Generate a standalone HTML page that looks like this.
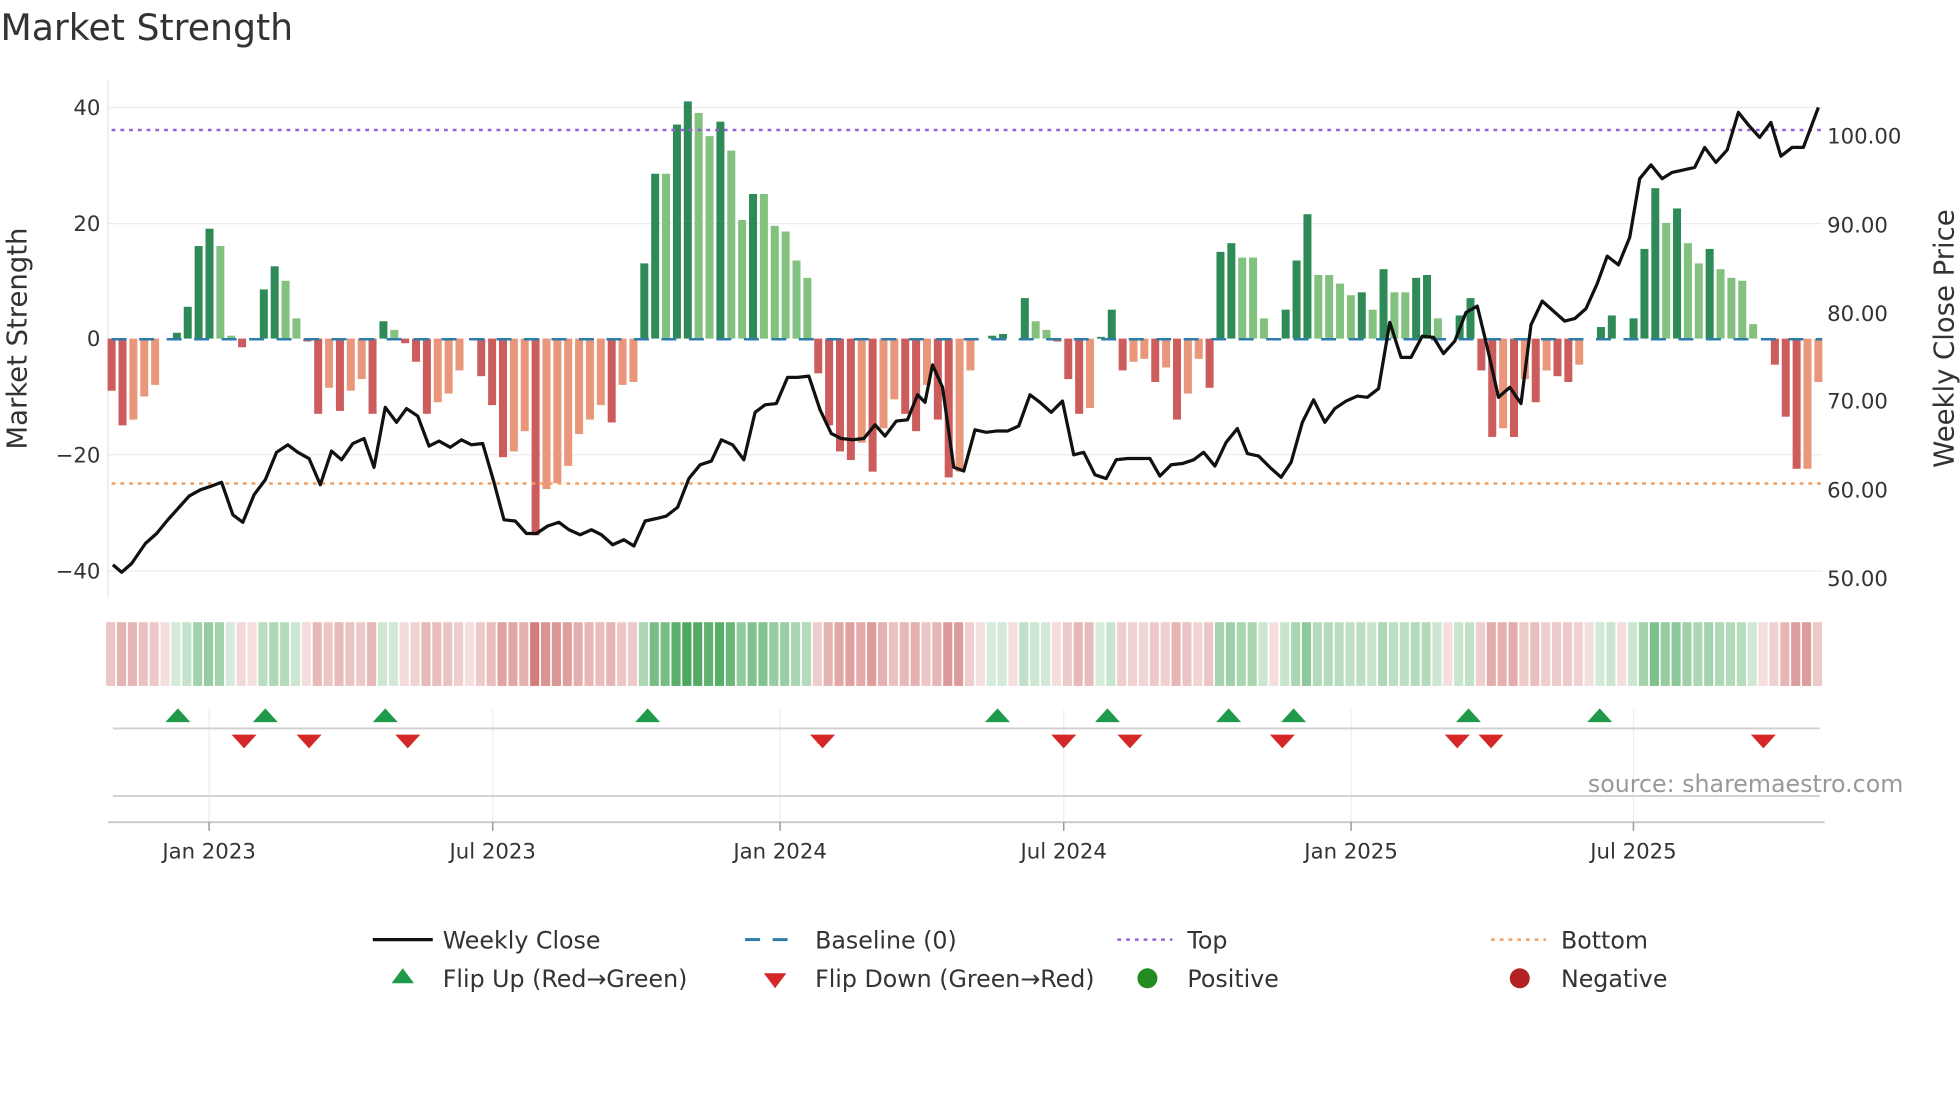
<!DOCTYPE html>
<html><head><meta charset="utf-8"><style>
html,body{margin:0;padding:0;background:#fff;width:1960px;height:1102px;overflow:hidden}
svg{display:block}
text{font-family:"DejaVu Sans","Liberation Sans",sans-serif;fill:#333}
</style></head><body>
<svg id="s" width="1960" height="1102" viewBox="0 0 1568 882" xmlns="http://www.w3.org/2000/svg">
<text x="0" y="32" font-size="29">Market Strength</text>
<g stroke="#ececec" stroke-width="1">
<line x1="86" y1="86" x2="1458" y2="86"/><line x1="86" y1="179" x2="1458" y2="179"/><line x1="86" y1="364" x2="1458" y2="364"/><line x1="86" y1="457" x2="1458" y2="457"/>
</g>
<line x1="86" y1="64" x2="86" y2="478" stroke="#e6e6e6"/>
<g id="bars"></g>
<line x1="89" y1="271.5" x2="1458" y2="271.5" stroke="#2f7cab" stroke-width="2" stroke-dasharray="12,10"/>
<line x1="89" y1="104" x2="1458" y2="104" stroke="#9a5fd8" stroke-width="2" stroke-dasharray="3,4"/>
<line x1="89" y1="387" x2="1458" y2="387" stroke="#f0a060" stroke-width="2" stroke-dasharray="3,4"/>
<polyline id="line" fill="none" stroke="#111" stroke-width="2.6" stroke-linejoin="round"/>
<g font-size="17" text-anchor="end">
<text x="80" y="92">40</text><text x="80" y="185">20</text><text x="80" y="277">0</text><text x="80" y="370">−20</text><text x="80" y="463">−40</text>
</g>
<g font-size="17">
<text x="1462" y="115">100.00</text><text x="1462" y="186">90.00</text><text x="1462" y="257">80.00</text><text x="1462" y="327">70.00</text><text x="1462" y="398">60.00</text><text x="1462" y="469">50.00</text>
</g>
<text font-size="22" transform="translate(21,271) rotate(-90)" text-anchor="middle">Market Strength</text>
<text font-size="22" transform="translate(1563,271) rotate(-90)" text-anchor="middle">Weekly Close Price</text>
<g id="strip"></g>
<g stroke="#eceef2" stroke-width="1">
<line x1="167" y1="568" x2="167" y2="658"/><line x1="394" y1="568" x2="394" y2="658"/><line x1="624" y1="568" x2="624" y2="658"/><line x1="851" y1="568" x2="851" y2="658"/><line x1="1081" y1="568" x2="1081" y2="658"/><line x1="1307" y1="568" x2="1307" y2="658"/>
</g>
<line x1="90" y1="583" x2="1456" y2="583" stroke="#d0d0d0" stroke-width="1.5"/>
<line x1="90" y1="637" x2="1456" y2="637" stroke="#d0d0d0" stroke-width="1.5"/>
<line x1="86" y1="658" x2="1460" y2="658" stroke="#c8c8c8" stroke-width="1.5"/>
<g stroke="#999" stroke-width="1.2">
<line x1="167" y1="658" x2="167" y2="665"/><line x1="394" y1="658" x2="394" y2="665"/><line x1="624" y1="658" x2="624" y2="665"/><line x1="851" y1="658" x2="851" y2="665"/><line x1="1081" y1="658" x2="1081" y2="665"/><line x1="1307" y1="658" x2="1307" y2="665"/>
</g>
<g id="flips"></g>
<text x="1523" y="634" font-size="19" text-anchor="end" style="fill:#999">source: sharemaestro.com</text>
<g font-size="17" text-anchor="middle">
<text x="167" y="687">Jan 2023</text><text x="394" y="687">Jul 2023</text><text x="624" y="687">Jan 2024</text><text x="851" y="687">Jul 2024</text><text x="1081" y="687">Jan 2025</text><text x="1307" y="687">Jul 2025</text>
</g>
<g font-size="19">
<line x1="298" y1="752" x2="346" y2="752" stroke="#111" stroke-width="2.6"/><text x="354" y="759">Weekly Close</text>
<line x1="596" y1="752" x2="640" y2="752" stroke="#2f7cab" stroke-width="2.4" stroke-dasharray="12,10"/><text x="652" y="759">Baseline (0)</text>
<line x1="894" y1="752" x2="938" y2="752" stroke="#9a5fd8" stroke-width="2" stroke-dasharray="3,4"/><text x="950" y="759">Top</text>
<line x1="1193" y1="752" x2="1237" y2="752" stroke="#f0a060" stroke-width="2" stroke-dasharray="3,4"/><text x="1249" y="759">Bottom</text>
<polygon points="322,775 331,787 313,787" fill="#1f9a4a"/><text x="354" y="790">Flip Up (Red→Green)</text>
<polygon points="611,779 629,779 620,791" fill="#d62728"/><text x="652" y="790">Flip Down (Green→Red)</text>
<circle cx="918" cy="783" r="8" fill="#228b22"/><text x="950" y="790">Positive</text>
<circle cx="1216" cy="783" r="8" fill="#b22222"/><text x="1249" y="790">Negative</text>
</g>
</svg>
<script>
var v=[-9,-15,-14,-10,-8,0,1,5.5,16,19,16,0.5,-1.5,0,8.5,12.5,10,3.5,-0.5,-13,-8.5,-12.5,-9,-7,-13,3,1.5,-0.8,-4,-13,-11,-9.5,-5.5,0,-6.5,-11.5,-20.5,-19.5,-16,-34,-26,-25,-22,-16.5,-14,-11.5,-14.5,-8,-7.5,13,28.5,28.5,37,41,39,35,37.5,32.5,20.5,25,25,19.5,18.5,13.5,10.5,-6,-15,-19.5,-21,-18,-23,-15.5,-10.5,-13,-16,-8,-14,-24,-23,-5.5,0,0.5,0.8,0,7,3,1.5,-0.5,-7,-13,-12,0.3,5,-5.5,-4,-3.5,-7.5,-5,-14,-9.5,-3.5,-8.5,15,16.5,14,14,3.5,0,5,13.5,21.5,11,11,9.5,7.5,8,5,12,8,8,10.5,11,3.5,0,4,7,-5.5,-17,-15.5,-17,-7,-11,-5.5,-6.5,-7.5,-4.5,0,2,4,0,3.5,15.5,26,20,22.5,16.5,13,15.5,12,10.5,10,2.5,0,-4.5,-13.5,-22.5,-22.5,-7.5];
var n=v.length,x0=89,x1=1455,dx=(x1-x0)/(n-1),b='',st='';
for(var i=0;i<n;i++){var x=x0+i*dx,val=v[i],p=i?v[i-1]:0,c;
 if(val>0)c=(val>p)?'#2e8b57':'#82c17e';else c=(val<p)?'#cd5c5c':'#e9967a';
 if(Math.abs(val)>0.2){var y=val>0?271-val*4.63:271,h=Math.abs(val)*4.63;
 b+='<rect x="'+(x-3.2)+'" y="'+y+'" width="6.4" height="'+h+'" fill="'+c+'"/>';}
 var a=Math.min(0.95,0.2+Math.abs(val)/40*0.7),col=val>0?'rgba(60,160,80,'+a+')':'rgba(200,90,90,'+a+')';
 if(Math.abs(val)<0.2)col='rgba(200,90,90,0.2)';
 st+='<rect x="'+(x-4.4)+'" y="498" width="7.3" height="51" fill="'+col+'"/>';}
document.getElementById('bars').innerHTML=b;document.getElementById('strip').innerHTML=st;
var L=[90,452,97,458,105,451,116,435,125,427,134,416,143,406,151,397,160,392,169,389,177,386,186,412,194,418,203,396,212,384,221,362,230,356,238,362,247,367,256,388,265,361,273,368,282,355,291,351,299,374,308,326,317,338,325,327,334,333,343,357,351,353,360,358,369,352,377,356,386,355,395,386,403,416,412,417,421,427,429,427,438,421,447,418,455,424,464,428,473,424,481,428,490,436,499,432,507,437,516,417,525,415,533,413,542,406,551,383,560,372,569,369,577,352,586,356,595,368,604,330,612,324,621,323,630,302,638,302,647,301,656,328,665,347,673,351,682,352,691,351,700,340,708,349,717,337,726,336,734,316,740,322,746,292,754,310,763,374,771,377,780,344,789,346,797,345,806,345,815,341,824,316,832,322,841,330,850,321,859,364,867,362,876,380,885,383,893,368,902,367,911,367,920,367,928,381,937,372,946,371,955,368,963,362,972,373,981,354,990,343,998,363,1007,365,1016,374,1025,382,1033,370,1042,338,1051,320,1060,338,1068,327,1077,321,1086,317,1094,318,1103,311,1112,258,1121,286,1129,286,1138,269,1147,270,1155,283,1164,273,1173,250,1182,245,1190,278,1199,318,1208,310,1217,323,1225,260,1234,241,1243,249,1252,257,1260,255,1269,247,1278,227,1286,205,1295,212,1304,190,1312,143,1321,132,1330,143,1338,138,1347,136,1356,134,1364,118,1373,130,1382,120,1391,90,1399,100,1408,110,1417,98,1425,125,1434,118,1443,118,1455,86];
var pts='';for(var j=0;j<L.length;j+=2)pts+=L[j]+','+L[j+1]+' ';
document.getElementById('line').setAttribute('points',pts);
var up=[142,212,308,518,798,886,983,1035,1175,1280],dn=[195,247,326,658,851,904,1026,1166,1193,1411],f='';
up.forEach(function(x){f+='<polygon points="'+x+',567 '+(x+10)+',578 '+(x-10)+',578" fill="#1f9a4a"/>';});
dn.forEach(function(x){f+='<polygon points="'+(x-10)+',588 '+(x+10)+',588 '+x+',599" fill="#d62728"/>';});
document.getElementById('flips').innerHTML=f;
</script>
</body></html>
